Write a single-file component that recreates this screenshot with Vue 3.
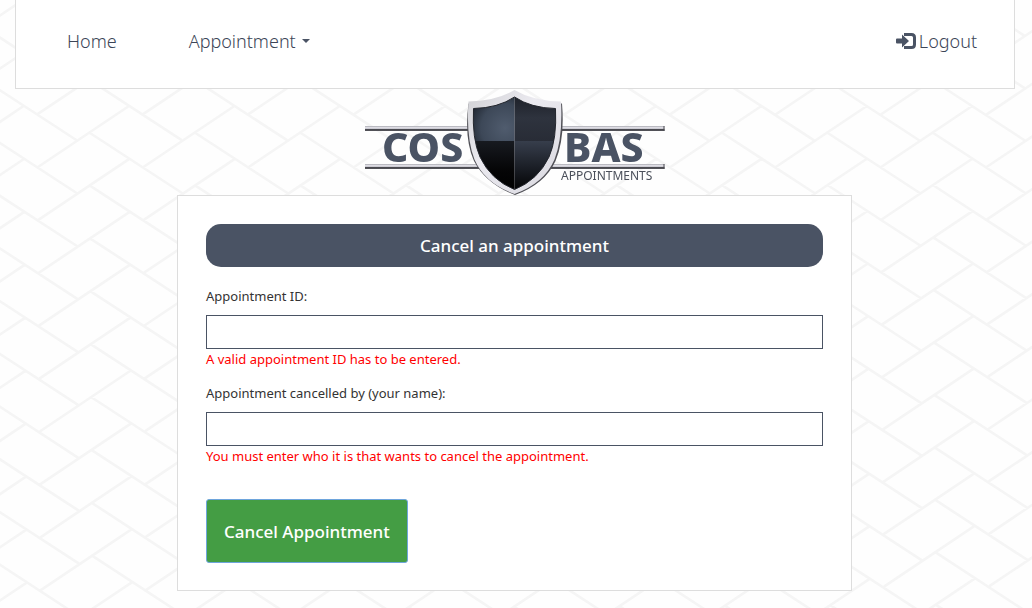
<script setup>
import { ref } from 'vue'

const appointmentId = ref('')
const cancelledBy = ref('')

// Diamond paving pattern: every cell holds one falling and one rising joint.
const point = (x, y, i, j) => {
  const px = x + 105.4 * i + 0.35 * j
  const py = y + (52.9 - 0.055 * i) * j
  return `${px.toFixed(1)} ${py.toFixed(1)}`
}

const segments = []
for (let i = -2; i < 24; i++) {
  for (let j = -4; j < 30; j++) {
    segments.push(`M${point(90, 133, i, j)}L${point(182, 193, i, j)}`)
    segments.push(`M${point(38, 167, i, j)}L${point(129, 106, i, j)}`)
  }
}
const paving = segments.join('')
</script>

<template>
  <div class="page">
    <svg class="backdrop" aria-hidden="true">
      <path :d="paving" />
    </svg>

    <header class="topbar">
      <nav class="nav">
        <a class="nav-link" href="#">Home</a>
        <a class="nav-link" href="#">Appointment <span class="caret"></span></a>
      </nav>
      <a class="nav-link logout" href="#">
        <svg class="login-icon" viewBox="0 0 20 16" aria-hidden="true">
          <path d="M1 5.500h5V1.500l7 6.500-7 6.500v-4H1q-1 0-1-1v-3q0-1 1-1z" />
          <path d="M8 0h7.500Q20 0 20 4.500v7q0 4.500-4.500 4.500H8v-3h7.500q1.500 0 1.500-1.500v-7Q17 3 15.500 3H8z" />
        </svg>
        Logout
      </a>
    </header>

    <main class="content">
      <svg class="logo" viewBox="-1 0 301 106" role="img" aria-label="COS BAS Appointments">
        <defs>
          <linearGradient id="bar" x1="0" y1="0" x2="0" y2="1">
            <stop offset="0" stop-color="#a9a9b0" />
            <stop offset="0.3" stop-color="#dedde4" />
            <stop offset="0.6" stop-color="#c4c3cb" />
            <stop offset="0.7" stop-color="#4a4a50" />
            <stop offset="1" stop-color="#55555b" />
          </linearGradient>
          <linearGradient id="rim" x1="0" y1="0" x2="1" y2="1">
            <stop offset="0" stop-color="#d0d0d4" />
            <stop offset="0.4" stop-color="#ebeaf0" />
            <stop offset="1" stop-color="#d9d8df" />
          </linearGradient>
          <radialGradient id="steel" gradientUnits="userSpaceOnUse" cx="140" cy="38" r="40">
            <stop offset="0" stop-color="#505c6e" />
            <stop offset="0.6" stop-color="#3d4858" />
            <stop offset="1" stop-color="#1a2029" />
          </radialGradient>
          <linearGradient id="slate" x1="0" y1="0" x2="0" y2="1">
            <stop offset="0" stop-color="#1c1f27" />
            <stop offset="0.5" stop-color="#2e333e" />
            <stop offset="1" stop-color="#282c36" />
          </linearGradient>
          <linearGradient id="night" x1="0" y1="0" x2="0" y2="1">
            <stop offset="0" stop-color="#171a20" />
            <stop offset="0.6" stop-color="#050506" />
            <stop offset="1" stop-color="#000" />
          </linearGradient>
          <linearGradient id="dusk" x1="0" y1="0" x2="0" y2="1">
            <stop offset="0" stop-color="#373e4c" />
            <stop offset="0.5" stop-color="#1c2028" />
            <stop offset="1" stop-color="#020203" />
          </linearGradient>
          <clipPath id="face">
            <path d="M149.500 7Q166 18 190.500 18.500Q192 49 184 67Q173 90 149.500 99.500Q126 90 115 67Q107 49 108.500 18.500Q133 18 149.500 7z" />
          </clipPath>
        </defs>
        <rect x="0" y="37" width="299.500" height="5" fill="url(#bar)" />
        <rect x="0" y="75" width="299.500" height="5" fill="url(#bar)" />
        <rect x="298.500" y="37" width="1" height="5" fill="#4a4a50" />
        <rect x="298.500" y="75" width="1" height="5" fill="#4a4a50" />
        <g transform="translate(0 1)">
          <path d="M150 2Q169 14 197 13.500Q200 49 190.500 71Q180 94 150 105Q121 94 109 71Q99 49 103.500 13.500Q132 14 150 2z" fill="#505056" />
          <path d="M149.500 0Q168 11 196 11.500Q198 48 189.500 69.500Q179 93.500 149.500 104Q120 93.500 109.500 69.500Q101 48 103.500 11.500Q131 11 149.500 0z" fill="url(#rim)" />
          <g clip-path="url(#face)">
            <rect x="105" y="5" width="44.500" height="46" fill="url(#steel)" />
            <rect x="149.500" y="5" width="44.500" height="46" fill="url(#slate)" />
            <rect x="105" y="51" width="44.500" height="50" fill="url(#night)" />
            <rect x="149.500" y="51" width="44.500" height="50" fill="url(#dusk)" />
          </g>
          <path d="M149.500 7Q166 18 190.500 18.500Q192 49 184 67Q173 90 149.500 99.500Q126 90 115 67Q107 49 108.500 18.500Q133 18 149.500 7z" class="face-edge" />
        </g>
        <text class="logo-name" x="17" y="73">COS</text>
        <text class="logo-name" x="199" y="73">BAS</text>
        <text class="logo-sub" x="196" y="91">APPOINTMENTS</text>
      </svg>

      <form class="panel" novalidate @submit.prevent>
        <h1 class="title">Cancel an appointment</h1>

        <div class="field">
          <label for="appointment-id">Appointment ID:</label>
          <input id="appointment-id" v-model="appointmentId" type="text" aria-describedby="appointment-id-error" />
          <p id="appointment-id-error" class="error">A valid appointment ID has to be entered.</p>
        </div>

        <div class="field">
          <label for="cancelled-by">Appointment cancelled by (your name):</label>
          <input id="cancelled-by" v-model="cancelledBy" type="text" aria-describedby="cancelled-by-error" />
          <p id="cancelled-by-error" class="error">You must enter who it is that wants to cancel the appointment.</p>
        </div>

        <button class="submit" type="submit">Cancel Appointment</button>
      </form>
    </main>
  </div>
</template>

<style>
body {
  margin: 0;
  background: #fefefe;
}
</style>

<style scoped>
.page {
  padding: 0 17px 17px 15px;
  font-family: "Noto Sans", "Open Sans", sans-serif;
  font-size: 13px;
  line-height: 20px;
  color: #333;
}

.page * {
  box-sizing: border-box;
}

.backdrop {
  position: fixed;
  inset: 0;
  z-index: -1;
  width: 100%;
  height: 100%;
}

.backdrop path {
  fill: none;
  stroke: #f5f5f5;
  stroke-width: 2.6;
}

.topbar {
  display: flex;
  justify-content: space-between;
  align-items: flex-start;
  padding: 31px 37px 37px 51px;
  border: 1px solid #ddd;
  border-top: 0;
  background: #fff;
}

.nav {
  display: flex;
  gap: 72px;
}

.nav-link {
  display: flex;
  align-items: center;
  font-size: 18px;
  font-weight: 300;
  color: #3c4557;
  text-decoration: none;
}

.caret {
  margin-left: 6px;
  border: 4px solid transparent;
  border-top-color: #4a5364;
  border-bottom: 0;
}

.logout {
  gap: 3px;
}

.login-icon {
  width: 20px;
  height: 16px;
  fill: #4a5364;
}

.content {
  display: flex;
  flex-direction: column;
  align-items: center;
  padding-right: 1px;
}

.logo {
  display: block;
  width: 301px;
  height: 106px;
}

.face-edge {
  fill: none;
  stroke: #23262d;
  stroke-width: 1;
}

.logo-name {
  font-size: 41px;
  font-weight: 800;
  fill: #4a5364;
}

.logo-sub {
  font-size: 12px;
  font-weight: 400;
  fill: #4a4f5a;
}

.panel {
  width: 100%;
  max-width: 675px;
  padding: 28px 28px 27px;
  border: 1px solid #ddd;
  background: #fff;
}

.title {
  margin: 0 0 19px;
  border-radius: 15px;
  background: #4a5364;
  font-size: 17px;
  font-weight: 500;
  line-height: 43px;
  text-align: center;
  color: #fff;
}

.field {
  margin-bottom: 14px;
}

.field label {
  display: block;
  margin-bottom: 9px;
}

.field input {
  display: block;
  width: 100%;
  height: 34px;
  padding: 6px 12px;
  border: 1px solid #4a5364;
  border-radius: 0;
  background: #fff;
  font: inherit;
  color: #333;
}

.error {
  margin: 0;
  color: #f00;
}

.submit {
  display: block;
  height: 64px;
  margin-top: 33px;
  padding: 0 17px;
  border: 1px solid #6ea5dc;
  border-radius: 3px;
  background: #449d44;
  font-family: inherit;
  font-size: 17px;
  font-weight: 500;
  color: #fff;
}
</style>
